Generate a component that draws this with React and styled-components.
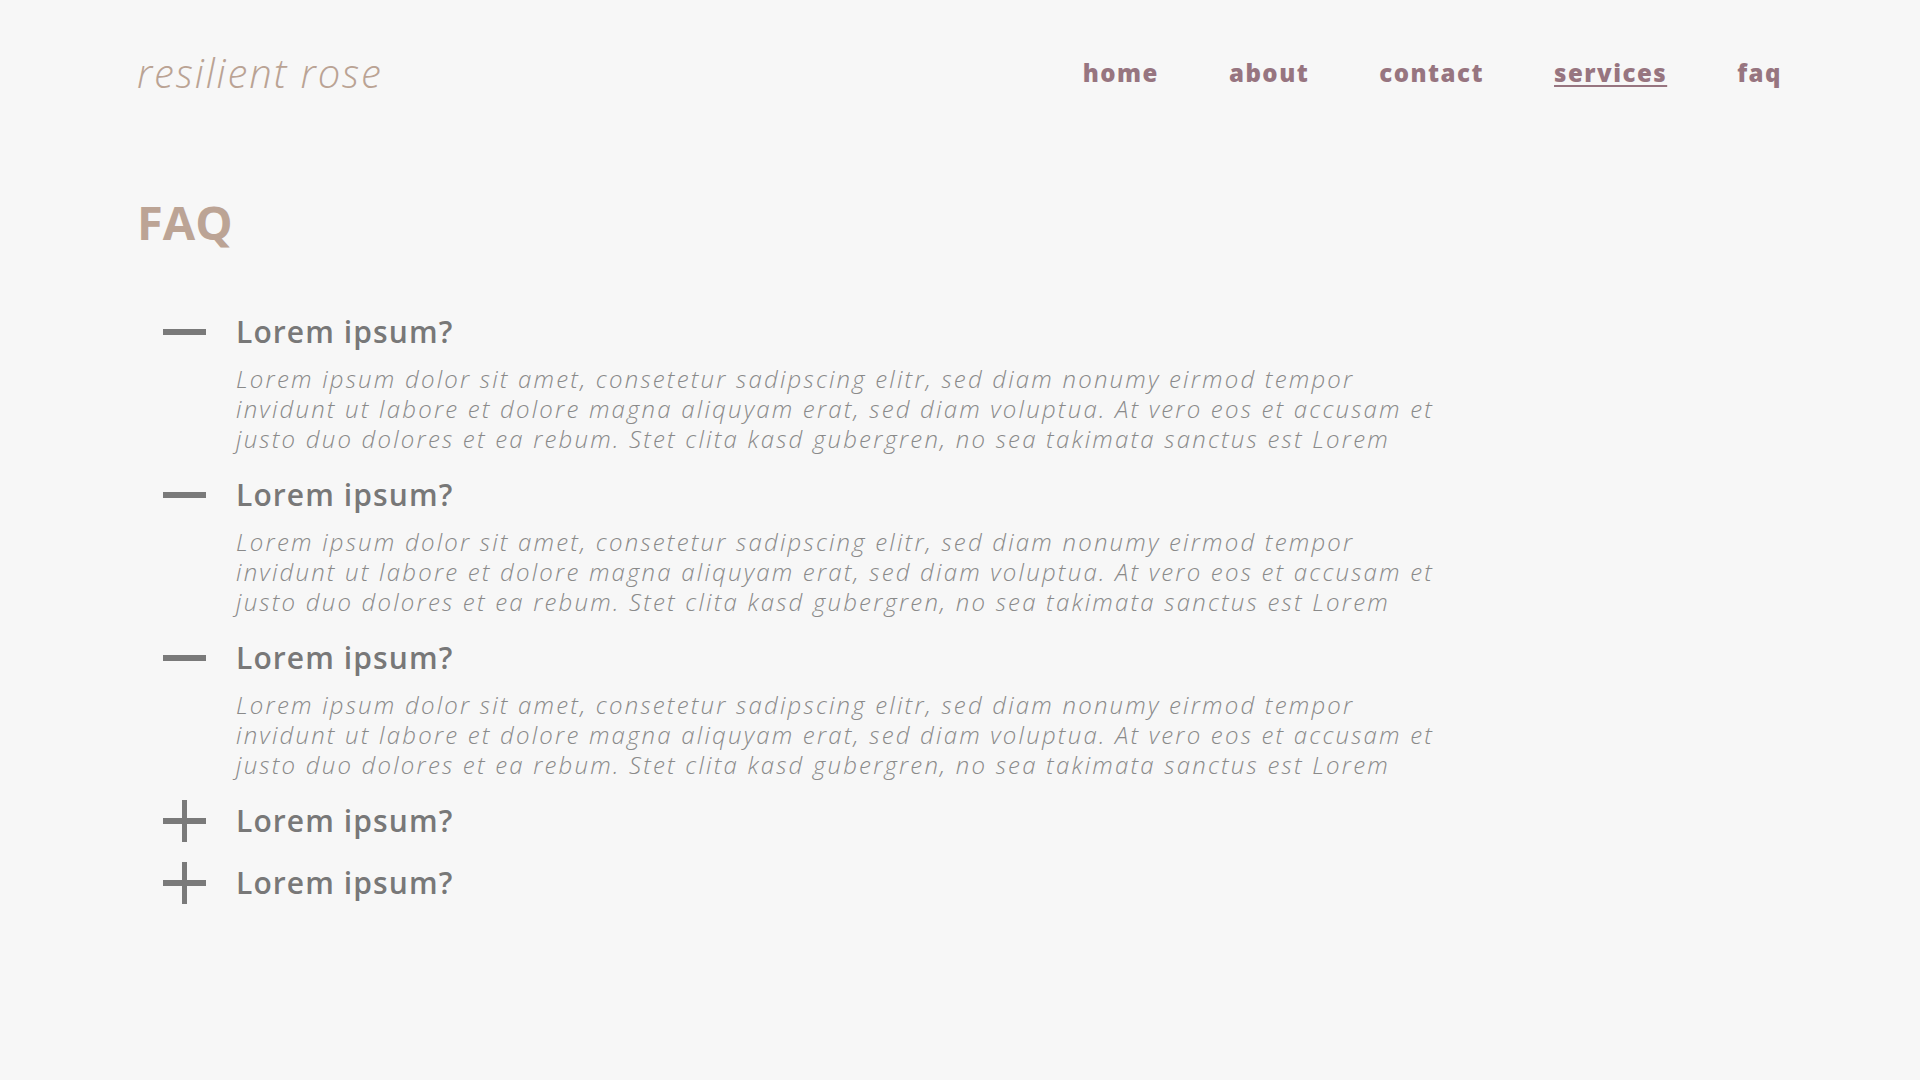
import React, { useState } from 'react'
import styled, { createGlobalStyle } from 'styled-components'

const GlobalStyle = createGlobalStyle`
  html, body {
    margin: 0;
    padding: 0;
    background: #f7f7f7;
  }
  body {
    font-family: 'Open Sans', 'Liberation Sans', sans-serif;
  }
`

const Page = styled.div`
  min-height: 1080px;
  background: #f7f7f7;
  padding: 52px 138px 0 137px;
  box-sizing: border-box;
`

const Header = styled.header`
  height: 42px;
  display: flex;
  align-items: center;
  justify-content: space-between;
`

const Logo = styled.div`
  font-size: 40px;
  line-height: 43px;
  font-weight: 300;
  font-style: italic;
  color: #baa394;
  letter-spacing: 1.9px;
  margin-top: -1px;
`

const Nav = styled.nav`
  display: flex;
  gap: 70px;
  margin-top: -1px;
`

const NavLink = styled.a`
  font-size: 24px;
  line-height: 28px;
  font-weight: 800;
  letter-spacing: 1.5px;
  color: #977580;
  text-decoration: ${p => (p.active ? 'underline' : 'none')};
  text-decoration-thickness: 2px;
  text-underline-offset: 3px;
  cursor: pointer;
`

const Title = styled.h1`
  margin: 100px 0 0;
  font-size: 47px;
  line-height: 56px;
  font-weight: 700;
  color: #bca495;
`

const List = styled.div`
  display: flex;
  flex-direction: column;
  gap: 20px;
  margin-top: 61px;
  padding-left: 26px;
`

const Item = styled.div`
  display: grid;
  grid-template-columns: 43px 1fr;
  column-gap: 30px;
`

const Toggle = styled.button`
  all: unset;
  height: 42px;
  display: flex;
  align-items: center;
  cursor: pointer;
`

const Question = styled.div`
  font-size: 30px;
  line-height: 42px;
  font-weight: 600;
  letter-spacing: 1.1px;
  color: #787878;
`

const Answer = styled.p`
  grid-column: 2;
  margin: 11px 0 0;
  max-width: 1220px;
  font-size: 24px;
  line-height: 30px;
  font-weight: 300;
  font-style: italic;
  letter-spacing: 2.2px;
  color: #8a8a8a;
`

const Icon = ({ open }) => (
  <svg width="43" height="42" viewBox="0 0 43 42">
    <rect x="0" y="18" width="43" height="6" fill="#7a7a7a" />
    {!open && <rect x="19" y="0" width="5" height="42" fill="#7a7a7a" />}
  </svg>
)

const text =
  'Lorem ipsum dolor sit amet, consetetur sadipscing elitr, sed diam nonumy eirmod tempor invidunt ut labore et dolore magna aliquyam erat, sed diam voluptua. At vero eos et accusam et justo duo dolores et ea rebum. Stet clita kasd gubergren, no sea takimata sanctus est Lorem'

export default function App() {
  const [open, setOpen] = useState([true, true, true, false, false])
  const toggle = i => setOpen(o => o.map((v, j) => (j === i ? !v : v)))

  return (
    <Page>
      <GlobalStyle />
      <Header>
        <Logo>resilient rose</Logo>
        <Nav>
          <NavLink>home</NavLink>
          <NavLink>about</NavLink>
          <NavLink>contact</NavLink>
          <NavLink active>services</NavLink>
          <NavLink>faq</NavLink>
        </Nav>
      </Header>
      <Title>FAQ</Title>
      <List>
        {open.map((isOpen, i) => (
          <Item key={i}>
            <Toggle onClick={() => toggle(i)}>
              <Icon open={isOpen} />
            </Toggle>
            <Question>Lorem ipsum?</Question>
            {isOpen && <Answer>{text}</Answer>}
          </Item>
        ))}
      </List>
    </Page>
  )
}
